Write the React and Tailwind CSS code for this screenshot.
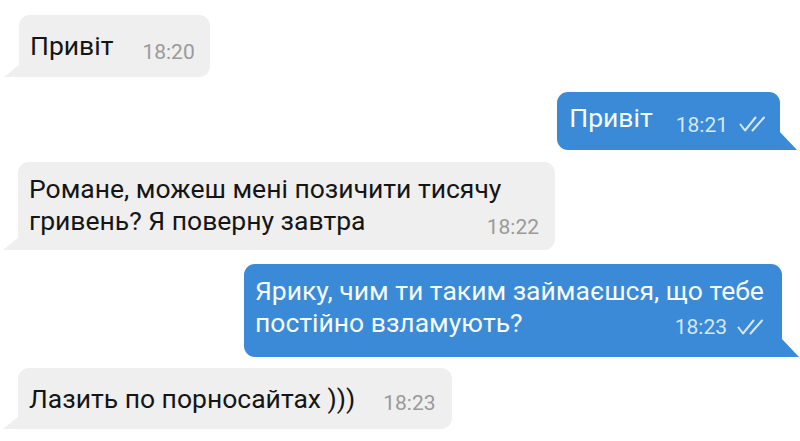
import React from "react";

const font = { fontFamily: "Roboto, 'Noto Sans', sans-serif" };

function Checks({ className }) {
  return (
    <svg viewBox="0 0 28 16" className={className} fill="none" stroke="currentColor" strokeWidth="2" strokeLinecap="round" strokeLinejoin="round">
      <path d="M1.5 8.5 L6 14.5 L16.5 1.5" />
      <path d="M13.5 14.5 L25 1.5" />
    </svg>
  );
}

function GrayTail() {
  return (
    <svg className="absolute left-[-15px] bottom-0 w-[16px] h-[13px]" viewBox="0 0 16 13">
      <path d="M16 0 L0 13 L16 13 Z" fill="#efefef" />
    </svg>
  );
}

function BlueTail() {
  return (
    <svg className="absolute right-[-17px] bottom-0 w-[18px] h-[19px]" viewBox="0 0 18 19">
      <path d="M0 0 L18 19 L0 19 Z" fill="#3a8ad8" />
    </svg>
  );
}

export default function App() {
  return (
    <div className="w-[800px] h-[441px] bg-white overflow-hidden flex flex-col" style={font}>
      {/* 1 */}
      <div className="relative mt-[15px] ml-[19px] self-start h-[62px] bg-[#efefef] rounded-[11px] rounded-bl-none pl-[11px] pr-[15px] flex items-center">
        <span className="text-[26.5px] leading-[32px] text-[#151515] whitespace-nowrap">Привіт</span>
        <span className="ml-[29px] mt-[12px] text-[21px] leading-[24px] text-[#9a9a9a]">18:20</span>
        <GrayTail />
      </div>

      {/* 2 */}
      <div className="relative mt-[15px] mr-[20px] self-end h-[58px] bg-[#3a8ad8] rounded-[11px] rounded-br-none pl-[12px] pr-[13px] flex items-center">
        <span className="mb-[6px] text-[26.5px] leading-[32px] text-[#f7faff] whitespace-nowrap">Привіт</span>
        <span className="ml-[23px] mt-[8px] text-[21px] leading-[24px] text-[#d6e7fa]">18:21</span>
        <Checks className="ml-[11px] mt-[5px] w-[28px] h-[16px] text-[#d6e7fa]" />
        <BlueTail />
      </div>

      {/* 3 */}
      <div className="relative mt-[12px] ml-[18px] self-start w-[537px] h-[88px] bg-[#efefef] rounded-[11px] rounded-bl-none pl-[11px] pr-[16px] pt-[11px] flex flex-col text-[26.5px] leading-[32px] text-[#151515] whitespace-nowrap">
        <div>Романе, можеш мені позичити тисячу</div>
        <div className="flex items-end">
          <span>гривень? Я поверну завтра</span>
          <span className="ml-auto mb-[-2px] text-[21px] leading-[24px] text-[#9a9a9a]">18:22</span>
        </div>
        <GrayTail />
      </div>

      {/* 4 */}
      <div className="relative mt-[14px] mr-[18px] self-end w-[538px] h-[93px] bg-[#3a8ad8] rounded-[11px] rounded-br-none pl-[11px] pr-[17px] pt-[11px] flex flex-col text-[26.5px] leading-[32px] text-[#f7faff] whitespace-nowrap">
        <div>Ярику, чим ти таким займаєшся, що тебе</div>
        <div className="flex items-end">
          <span>постійно взламують?</span>
          <span className="ml-auto text-[21px] leading-[24px] text-[#d6e7fa]">18:23</span>
          <Checks className="ml-[10px] mb-[4px] w-[28px] h-[16px] text-[#d6e7fa]" />
        </div>
        <BlueTail />
      </div>

      {/* 5 */}
      <div className="relative mt-[11px] ml-[18px] self-start h-[61px] bg-[#efefef] rounded-[11px] rounded-bl-none pl-[11px] pr-[16px] flex items-center">
        <span className="text-[26.5px] leading-[32px] text-[#151515] whitespace-nowrap">Лазить по порносайтах )))</span>
        <span className="ml-[28px] mt-[9px] text-[21px] leading-[24px] text-[#9a9a9a]">18:23</span>
        <GrayTail />
      </div>
    </div>
  );
}
